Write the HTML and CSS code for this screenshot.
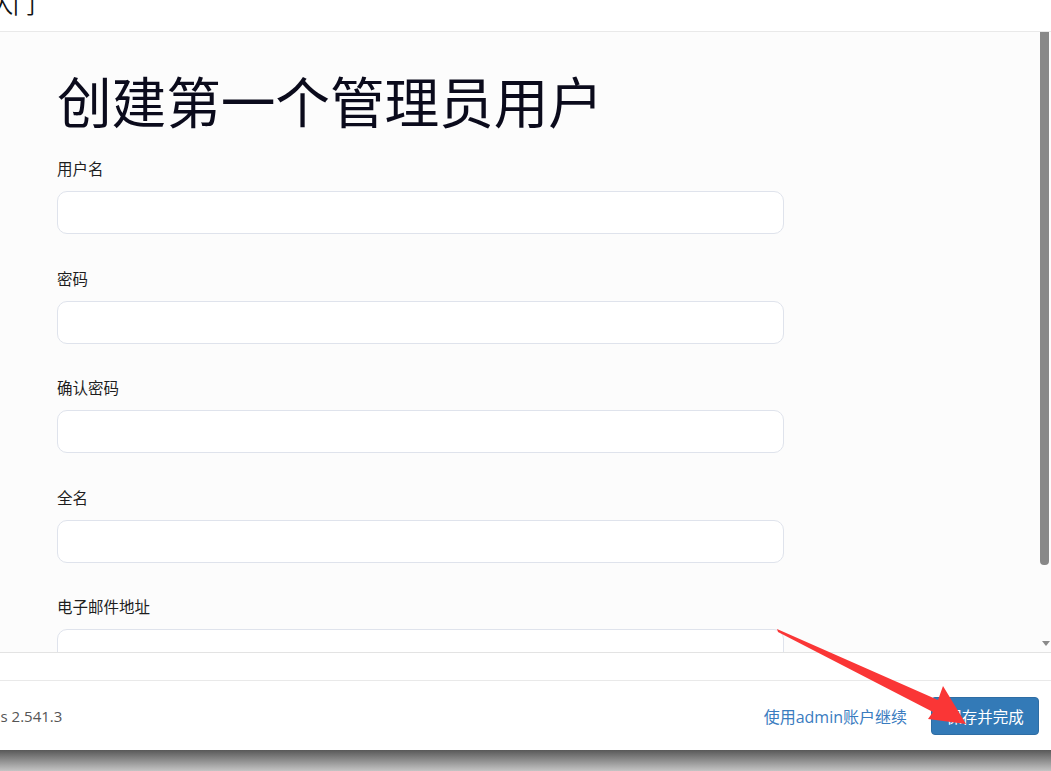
FILE: index.html
```html
<!DOCTYPE html>
<html lang="zh-CN">
<head>
<meta charset="utf-8">
<title>入门</title>
<link rel="stylesheet" href="styles.css">
</head>
<body>
<div class="page">
  <div class="dialog">
    <header class="dialog-header">
      <h2 class="dialog-title">入门</h2>
    </header>
    <div class="dialog-body">
      <div class="scroll-content">
        <h1 class="setup-title">创建第一个管理员用户</h1>
        <form class="admin-form">
          <div class="field">
            <label class="field-label">用户名</label>
            <input class="field-input" type="text">
          </div>
          <div class="field">
            <label class="field-label">密码</label>
            <input class="field-input" type="password">
          </div>
          <div class="field">
            <label class="field-label">确认密码</label>
            <input class="field-input" type="password">
          </div>
          <div class="field">
            <label class="field-label">全名</label>
            <input class="field-input" type="text">
          </div>
          <div class="field">
            <label class="field-label">电子邮件地址</label>
            <input class="field-input" type="email">
          </div>
        </form>
      </div>
      <div class="scrollbar">
        <div class="scrollbar-thumb"></div>
        <div class="scrollbar-arrow"></div>
      </div>
    </div>
    <div class="dialog-strip"></div>
    <footer class="dialog-footer">
      <span class="version">Jenkins 2.541.3</span>
      <div class="actions">
        <a class="skip-link" href="#">使用admin账户继续</a>
        <button class="btn-primary" type="button">保存并完成</button>
      </div>
    </footer>
  </div>
  <div class="backdrop"></div>

  <svg class="annotation" width="1051" height="771" viewBox="0 0 1051 771">
    <polygon fill="#fa3636" points="777,629 938,700 943,686 966,724 928,719 933,712 778,632"/>
  </svg>
</div>
</body>
</html>
```

FILE: styles.css
```css
html, body {
  margin: 0;
  padding: 0;
  background: #ffffff;
}

body {
  font-family: "Open Sans", "Noto Sans CJK SC", sans-serif;
  color: #222;
}

.page {
  position: relative;
  width: 1051px;
  height: 771px;
  overflow: hidden;
  display: flex;
  flex-direction: column;
}

.dialog {
  display: flex;
  flex-direction: column;
  background: #fff;
}

/* header: title mostly scrolled off the top */
.dialog-header {
  height: 31px;
  border-bottom: 1px solid #e9e9e9;
  overflow: hidden;
  background: #fff;
}

.dialog-title {
  margin: -12px 0 0 -9px;
  font-family: "Noto Sans CJK SC", sans-serif;
  font-weight: 400;
  font-size: 22px;
  line-height: 30px;
  color: #111;
}

.dialog-body {
  height: 620px;
  display: flex;
  background: #fcfcfc;
  overflow: hidden;
}

.scroll-content {
  flex: 1;
  padding: 0 0 0 57px;
  overflow: hidden;
}

.setup-title {
  margin: 27px 0 0 0;
  font-family: "Noto Sans CJK SC", sans-serif;
  font-weight: 400;
  font-size: 54.7px;
  line-height: 82px;
  color: #0b0b1c;
  letter-spacing: -0.1px;
}

.admin-form {
  margin-top: 16px;
  display: flex;
  flex-direction: column;
}

.field {
  display: flex;
  flex-direction: column;
  margin-bottom: 32.5px;
}

.field-label {
  font-family: "Noto Sans CJK SC", sans-serif;
  font-size: 15.5px;
  line-height: 22px;
  color: #1e1e1e;
  margin-bottom: 12px;
}

.field-input {
  box-sizing: border-box;
  width: 727px;
  height: 43px;
  border: 1px solid #dfe3ec;
  border-radius: 10px;
  background: #fff;
  outline: none;
  font-size: 15px;
  padding: 0 12px;
}

/* vertical scrollbar drawn on the body's right edge */
.scrollbar {
  width: 12px;
  background: #fcfcfc;
}

.scrollbar-thumb {
  margin: 0 2px 0 1px;
  height: 533px;
  background: #888;
  border-radius: 0 0 4px 4px;
}

.scrollbar-arrow {
  margin: 76px 0 0 3px;
  width: 0;
  height: 0;
  border-left: 4px solid transparent;
  border-right: 4px solid transparent;
  border-top: 5px solid #8a8a8a;
}

.dialog-strip {
  height: 27px;
  border-top: 1px solid #e3e3e3;
  border-bottom: 1px solid #e9e9e9;
  background: #fff;
}

.dialog-footer {
  height: 69px;
  display: flex;
  align-items: center;
  justify-content: space-between;
  padding-right: 12px;
  background: #fff;
}

.version {
  margin-left: -42px;
  font-size: 15px;
  color: #555;
}

.actions {
  display: flex;
  align-items: center;
  gap: 24px;
}

.skip-link {
  font-family: "Open Sans", "Noto Sans CJK SC", sans-serif;
  font-size: 16px;
  color: #3a7cbf;
  text-decoration: none;
}

.btn-primary {
  height: 38px;
  width: 108px;
  border: 1px solid #2e6da4;
  border-radius: 4px;
  background: #337ab7;
  color: #fff;
  font-family: "Noto Sans CJK SC", sans-serif;
  font-size: 15.5px;
  padding: 0;
  cursor: pointer;
}

.backdrop {
  flex: 1;
  background: linear-gradient(#585858, #c4c4c4);
}

.annotation {
  position: absolute;
  left: 0;
  top: 0;
  pointer-events: none;
}
```
